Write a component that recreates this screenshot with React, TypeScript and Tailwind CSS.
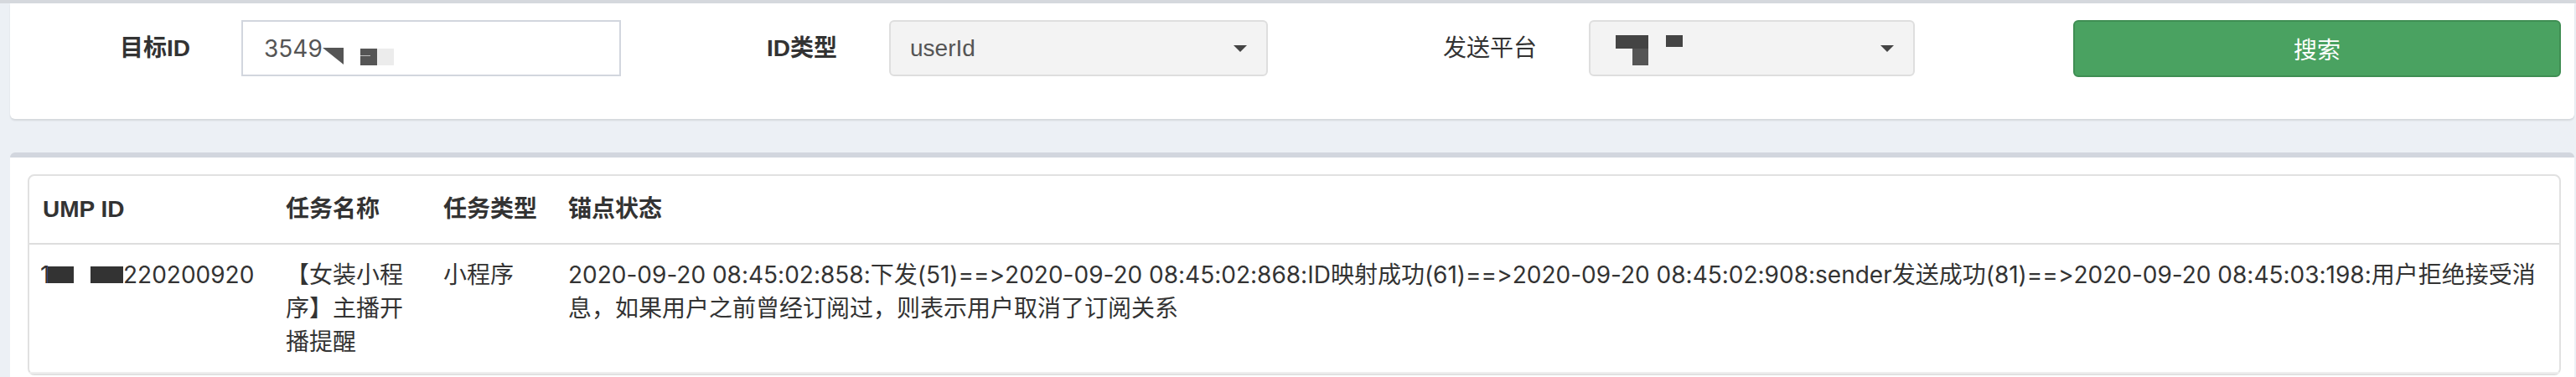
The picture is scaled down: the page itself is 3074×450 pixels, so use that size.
import React from "react";

const body = "font-['Inter','Noto_Sans_CJK_SC',sans-serif] [font-feature-settings:'calt'_0]";
const arial = "font-['Liberation_Sans','Noto_Sans_CJK_SC',sans-serif]";

function Caret() {
  return (
    <svg width="16" height="8" viewBox="0 0 16 8" className="shrink-0">
      <polygon points="0,0 16,0 8,8" fill="#444" />
    </svg>
  );
}

export default function App() {
  return (
    <div className={`w-[3074px] h-[450px] overflow-hidden bg-[#ecf0f5] ${body}`}>
      <div className="h-[4px] bg-[#d5d8dd]" />

      {/* search card */}
      <div className="ml-[12px] mr-[2px] h-[138px] bg-white rounded-b-[6px] shadow-[0_2px_2px_rgba(0,0,0,0.1)] pt-[20px] flex items-start">
        <div className="flex items-center h-[67px]">
          <div className={`w-[215px] text-right text-[28px] font-bold text-[#333] ${arial}`}>目标ID</div>
          <div className="ml-[61px] w-[453px] h-[67px] border-2 border-[#d2d6de] bg-white flex items-center pl-[25px] text-[28px] text-[#555]">
            <span>3549</span>
            <svg width="90" height="63" viewBox="0 0 90 63" className="shrink-0">
              <polygon points="0,31 25,31 25,51" fill="#555" />
              <rect x="45" y="32" width="20" height="20" fill="#555" />
              <rect x="45" y="40" width="12" height="1" fill="#bbb" />
              <rect x="65" y="32" width="20" height="20" fill="#ececec" />
            </svg>
          </div>
        </div>

        <div className="flex items-center h-[67px]">
          <div className={`w-[258px] text-right text-[28px] font-bold text-[#333] ${arial}`}>ID类型</div>
          <div className="ml-[62px] w-[452px] h-[67px] border-2 border-[#dedede] bg-[#f3f3f3] rounded-[6px] flex items-center justify-between pl-[23px] pr-[23px] text-[28px] text-[#555]">
            <span className={arial}>userId</span>
            <Caret />
          </div>
        </div>

        <div className="flex items-center h-[67px]">
          <div className={`w-[321px] text-right text-[28px] text-[#333] ${arial}`}>发送平台</div>
          <div className="ml-[62px] w-[389px] h-[67px] border-2 border-[#dedede] bg-[#f3f3f3] rounded-[6px] flex items-center justify-between pl-[30px] pr-[23px]">
            <svg width="80" height="63" viewBox="0 0 80 63" className="shrink-0">
              <rect x="0" y="16" width="39" height="16" fill="#444" />
              <rect x="20" y="32" width="19" height="20" fill="#555" />
              <rect x="60" y="16" width="20" height="14" fill="#444" />
            </svg>
            <Caret />
          </div>
        </div>

        <button className="ml-[189px] w-[582px] h-[68px] rounded-[6px] bg-[#4aa261] border-2 border-[#3f8e53] text-white text-[28px] flex items-center justify-center font-['Noto_Sans_CJK_SC',sans-serif]">
          搜索
        </button>
      </div>

      {/* result card */}
      <div className="mt-[40px] ml-[12px] mr-[2px] bg-white border-t-[6px] border-[#d2d6de] rounded-t-[6px] pt-[20px] pl-[21px] pr-[16px] h-[300px]">
        <div className="border-2 border-[#e1e1e1] rounded-[8px]">
          <table className="w-full table-fixed border-collapse text-[28px] leading-[40px] text-[#333]">
            <colgroup>
              <col className="w-[290px]" />
              <col className="w-[188px]" />
              <col className="w-[149px]" />
              <col />
            </colgroup>
            <thead>
              <tr className="border-b-2 border-[#dddddd]">
                <th className={`px-[16px] py-[20px] text-left font-bold ${arial}`}>UMP ID</th>
                <th className={`px-[16px] py-[20px] text-left font-bold ${arial}`}>任务名称</th>
                <th className={`px-[16px] py-[20px] text-left font-bold ${arial}`}>任务类型</th>
                <th className={`px-[16px] py-[20px] text-left font-bold ${arial}`}>锚点状态</th>
              </tr>
            </thead>
            <tbody>
              <tr className="border-b-2 border-[#eeeeee]">
                <td className="px-[16px] pt-[16px] pb-[16px] align-top whitespace-nowrap">
                  <span className="inline-block w-[9px] -ml-[3px]">1</span>
                  <span className="inline-block w-[31px] h-[20px] bg-[#333]" />
                  <span className="inline-block w-[20px]" />
                  <span className="inline-block w-[39px] h-[20px] bg-[#333]" />
                  <span>220200920</span>
                </td>
                <td className="px-[16px] pt-[16px] pb-[16px] align-top">【女装小程序】主播开播提醒</td>
                <td className="px-[16px] pt-[16px] pb-[16px] align-top">小程序</td>
                <td className="px-[16px] pt-[16px] pb-[16px] align-top">
                  2020-09-20 08:45:02:858:下发(51)==&gt;2020-09-20 08:45:02:868:ID映射成功(61)==&gt;2020-09-20 08:45:02:908:sender发送成功(81)==&gt;2020-09-20 08:45:03:198:用户拒绝接受消
                  <br />
                  息，如果用户之前曾经订阅过，则表示用户取消了订阅关系
                </td>
              </tr>
            </tbody>
          </table>
        </div>
      </div>
    </div>
  );
}
